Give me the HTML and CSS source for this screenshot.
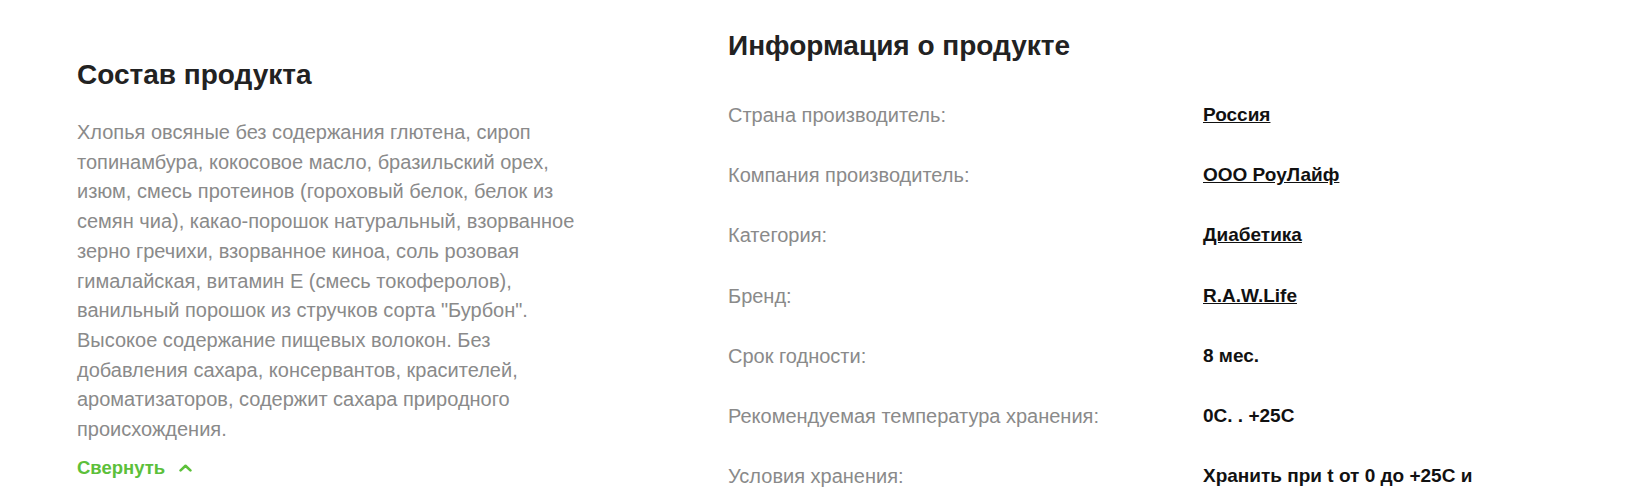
FILE: index.html
```html
<!DOCTYPE html>
<html lang="ru">
<head>
  <meta charset="UTF-8">
  <meta name="viewport" content="width=device-width, initial-scale=1">
  <title>Состав и информация о продукте</title>
  <link rel="stylesheet" href="styles.css">
</head>
<body>
  <div class="product-details">
    <section class="composition">
      <h2 class="section-title">Состав продукта</h2>
      <p class="composition-text">Хлопья овсяные без содержания глютена, сироп топинамбура, кокосовое масло, бразильский орех, изюм, смесь протеинов (гороховый белок, белок из семян чиа), какао-порошок натуральный, взорванное зерно гречихи, взорванное киноа, соль розовая гималайская, витамин Е (смесь токоферолов), ванильный порошок из стручков сорта "Бурбон". Высокое содержание пищевых волокон. Без добавления сахара, консервантов, красителей, ароматизаторов, содержит сахара природного происхождения.</p>
      <button class="toggle" type="button">Свернуть
        <svg class="toggle-icon" width="13" height="8" viewBox="0 0 13 8"><path d="M1.6 6.4 6.5 1.8l4.9 4.6" fill="none" stroke="currentColor" stroke-width="2.6" stroke-linecap="round" stroke-linejoin="round"/></svg>
      </button>
    </section>
    <section class="info">
      <h2 class="section-title">Информация о продукте</h2>
      <dl class="props">
        <div class="prop"><dt>Страна производитель:</dt><dd><a href="#">Россия</a></dd></div>
        <div class="prop"><dt>Компания производитель:</dt><dd><a href="#">ООО РоуЛайф</a></dd></div>
        <div class="prop"><dt>Категория:</dt><dd><a href="#">Диабетика</a></dd></div>
        <div class="prop"><dt>Бренд:</dt><dd><a href="#">R.A.W.Life</a></dd></div>
        <div class="prop"><dt>Срок годности:</dt><dd>8 мес.</dd></div>
        <div class="prop"><dt>Рекомендуемая температура хранения:</dt><dd>0С. . +25С</dd></div>
        <div class="prop"><dt>Условия хранения:</dt><dd>Хранить при t от 0 до +25С и относительной влажности воздуха не более 75%</dd></div>
      </dl>
    </section>
  </div>
</body>
</html>
```

FILE: styles.css
```css
:root {
  --title-color: #222222;
  --text-color: #8a8a8a;
  --value-color: #111111;
  --accent: #5cc03a;
}
* { box-sizing: border-box; margin: 0; padding: 0; }
body {
  font-family: "Liberation Sans", Arial, sans-serif;
  background: #ffffff;
  color: var(--text-color);
  overflow: hidden;
}
.product-details {
  display: flex;
  padding-left: 77px;
}
.section-title {
  font-size: 28px;
  line-height: 36px;
  font-weight: 700;
  color: var(--title-color);
}
.composition {
  width: 651px;
  flex: none;
  padding-top: 57px;
}
.composition-text {
  width: 508px;
  margin-top: 25px;
  font-size: 20px;
  line-height: 29.7px;
}
.toggle {
  display: flex;
  align-items: center;
  margin-top: 12px;
  background: none;
  border: none;
  font-family: inherit;
  font-size: 18.5px;
  line-height: 22px;
  font-weight: 700;
  color: var(--accent);
  cursor: pointer;
}
.toggle-icon { margin-left: 14px; }
.info {
  flex: 1;
  padding-top: 28px;
}
.props { margin-top: 36px; }
.prop {
  display: flex;
  font-size: 20px;
  line-height: 30px;
  margin-bottom: 30.2px;
}
.prop dt { width: 475px; flex: none; }
.prop dd {
  width: 300px;
  font-size: 19px;
  font-weight: 700;
  color: var(--value-color);
}
.prop dd a { color: inherit; }
```
